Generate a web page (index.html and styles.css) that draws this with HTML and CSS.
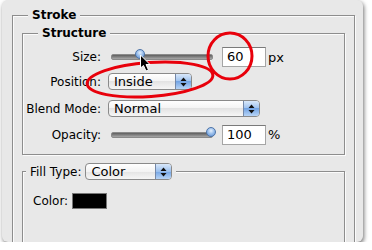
FILE: index.html
```html
<!DOCTYPE html>
<html lang="en">
<head>
    <meta charset="UTF-8">
    <title>Stroke</title>
    <link rel="stylesheet" href="styles.css">
</head>
<body>
    <div class="panel">
        <fieldset class="group stroke">
            <legend>Stroke</legend>
            <fieldset class="group structure">
                <legend>Structure</legend>
                <div class="rows">
                    <div class="lbl">Size:</div>
                    <div class="ctl">
                        <div class="slider"><span class="thumb" style="left: 23px;"></span></div>
                        <div class="field">60</div>
                        <div class="unit">px</div>
                    </div>
                    <div class="lbl">Position:</div>
                    <div class="ctl">
                        <div class="select select-position">
                            <span class="txt">Inside</span>
                            <span class="arrows"><svg width="7" height="10" viewBox="0 0 7 10"><path d="M0.5 4 L3.5 0.5 L6.5 4 Z M0.5 6 L3.5 9.5 L6.5 6 Z" fill="#111"/></svg></span>
                        </div>
                    </div>
                    <div class="lbl">Blend Mode:</div>
                    <div class="ctl">
                        <div class="select select-blend">
                            <span class="txt">Normal</span>
                            <span class="arrows"><svg width="7" height="10" viewBox="0 0 7 10"><path d="M0.5 4 L3.5 0.5 L6.5 4 Z M0.5 6 L3.5 9.5 L6.5 6 Z" fill="#111"/></svg></span>
                        </div>
                    </div>
                    <div class="lbl">Opacity:</div>
                    <div class="ctl">
                        <div class="slider"><span class="thumb" style="left: 94px;"></span></div>
                        <div class="field">100</div>
                        <div class="unit">%</div>
                    </div>
                </div>
            </fieldset>
            <fieldset class="group fill">
                <legend>
                    <span class="fill-label">Fill Type:</span>
                    <span class="select select-fill">
                        <span class="txt">Color</span>
                        <span class="arrows"><svg width="7" height="10" viewBox="0 0 7 10"><path d="M0.5 4 L3.5 0.5 L6.5 4 Z M0.5 6 L3.5 9.5 L6.5 6 Z" fill="#111"/></svg></span>
                    </span>
                </legend>
                <div class="color-row">
                    <span>Color:</span>
                    <span class="swatch"></span>
                </div>
            </fieldset>
        </fieldset>
        <svg class="marks" width="361" height="242" viewBox="0 0 361 242">
            <g transform="translate(-2 0)">
                <ellipse cx="230" cy="56" rx="22" ry="23" fill="none" stroke="#e8000b" stroke-width="3"/>
                <ellipse cx="150" cy="79.5" rx="63" ry="17" fill="none" stroke="#e8000b" stroke-width="3" transform="rotate(-4 150 79.5)"/>
                <path d="M140.5 55 L140.5 68 L143.5 65.5 L146 71 L148.5 70 L146 64.5 L150 64.5 Z" fill="#000" stroke="#fff" stroke-width="1" stroke-linejoin="round"/>
            </g>
        </svg>
    </div>
</body>
</html>
```

FILE: styles.css
```css
body {
    margin: 0;
    background-color: #fff;
    font-family: "DejaVu Sans", sans-serif;
    font-size: 12px;
    color: #000;
}
.panel {
    position: relative;
    margin-left: 2px;
    width: 361px;
    height: 242px;
    padding-top: 7px;
    box-sizing: border-box;
    background-color: #e8e8e8;
    border-radius: 6px;
    box-shadow: 1px 2px 4px rgba(0, 0, 0, 0.55);
    overflow: hidden;
}
.group {
    margin: 0;
    padding: 0;
    border: 1px solid #8d8d8d;
    box-shadow: inset 1px 1px 0 #fbfbfb, 1px 1px 0 #fbfbfb;
}
.group legend {
    padding: 0 4px;
    background-color: #e8e8e8;
    font-weight: bold;
    line-height: 16px;
}
.stroke {
    margin: 0 8px 0 10px;
    height: 300px;
}
.stroke > legend { margin-left: 15px; }
.structure {
    margin: 2px 9px 0 9px;
}
.structure > legend { margin-left: 15px; }
.rows {
    display: grid;
    grid-template-columns: 78px auto;
    grid-template-rows: 20px 29px 25px 27px;
    column-gap: 7px;
    align-items: center;
    padding: 6px 0 6px;
}
.lbl {
    text-align: right;
}
.ctl {
    display: flex;
    align-items: center;
}
.slider {
    position: relative;
    width: 100px;
    height: 4px;
    margin-left: 3px;
    border-radius: 2px;
    border: 1px solid #8a8a8a;
    background: linear-gradient(#5e5e5e, #a8a8a8);
}
.thumb {
    position: absolute;
    top: -6px;
    width: 10px;
    height: 10px;
    border-radius: 5px;
    border: 1px solid #4d74a8;
    background: radial-gradient(circle at 50% 35%, #e6f0fc 0, #9cc0ec 45%, #5d8fd3 100%);
    box-sizing: border-box;
}
.field {
    width: 44px;
    height: 20px;
    margin-left: 9px;
    padding-left: 4px;
    box-sizing: border-box;
    border: 1px solid #a5a5a5;
    border-top-color: #7a7a7a;
    background-color: #fff;
    font-size: 13px;
    line-height: 18px;
}
.unit {
    margin-left: 2px;
    font-size: 13px;
}
.select {
    display: flex;
    height: 17px;
    box-sizing: border-box;
    border: 1px solid #8a8a8a;
    border-radius: 4px;
    background: linear-gradient(#fff, #f3f3f3 50%, #e3e3e3 50%, #f6f6f6);
    overflow: hidden;
    font-weight: normal;
    font-size: 13px;
}
.select .txt {
    flex: 1;
    padding-left: 5px;
    line-height: 15px;
}
.select .arrows {
    width: 15px;
    display: flex;
    align-items: center;
    justify-content: center;
    border-left: 1px solid #7488a8;
    background: linear-gradient(#d9e8fa, #9bc0ee 50%, #73a4e4 50%, #b7d4f6);
}
.select-position { width: 84px; }
.select-blend { width: 152px; }
.fill {
    margin: 8px 9px 0;
    height: 200px;
}
.fill > legend {
    display: flex;
    align-items: center;
    margin-left: 3px;
    font-weight: normal;
}
.fill-label {
    margin-right: 4px;
}
.select-fill { width: 87px; }
.color-row {
    display: flex;
    align-items: center;
    gap: 4px;
    padding: 13px 0 0 10px;
}
.swatch {
    width: 35px;
    height: 16px;
    box-sizing: border-box;
    border: 1px solid #777;
    background-color: #000;
}
.marks {
    position: absolute;
    left: 0;
    top: 0;
}
```
